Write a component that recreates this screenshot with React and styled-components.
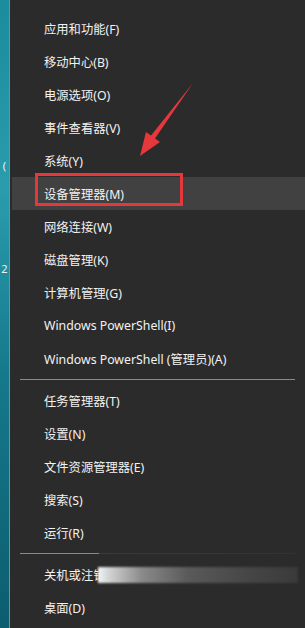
import React from 'react'
import styled, { createGlobalStyle } from 'styled-components'

const GlobalStyle = createGlobalStyle`
  html, body {
    margin: 0;
    padding: 0;
    background: #2b2b2b;
  }
  body {
    font-family: "Noto Sans", "Noto Sans CJK SC", sans-serif;
  }
`

const Page = styled.div`
  position: relative;
  display: flex;
  width: 305px;
  height: 628px;
  overflow: hidden;
`

const Desktop = styled.div`
  width: 9px;
  flex-shrink: 0;
  background: linear-gradient(180deg, #1b8c9c 0%, #2a9cae 30%, #15798b 60%, #0c5d6e 100%);
  display: flex;
  flex-direction: column;
  align-items: center;
  color: #e8f4f6;
  font-size: 11px;
  line-height: 1;
`

const Glyph = styled.span`
  margin-top: ${p => p.top}px;
`

const Menu = styled.div`
  flex: 1;
  border-left: 1px solid #8a8a8a;
  background: #2b2b2b;
  padding-top: 12px;
  display: flex;
  flex-direction: column;
`

const Item = styled.div`
  position: relative;
  height: 33px;
  display: flex;
  align-items: center;
  margin-left: 2px;
  padding-left: 32px;
  font-size: 12.3px;
  color: #f2f2f2;
  background: ${p => (p.active ? '#414141' : 'transparent')};
  white-space: nowrap;
`

const Divider = styled.div`
  height: 1px;
  margin: 4px 10px;
  background: ${p => p.faded
    ? 'linear-gradient(90deg, #8a8a8a 0, #8a8a8a 78px, #3a3a3a 80px, #333 100%)'
    : '#8a8a8a'};
`

const Mark = styled.div`
  position: absolute;
  left: 23px;
  top: -4px;
  width: 142px;
  height: 27px;
  border: 3px solid #e5383d;
`

const Smear = styled.div`
  position: absolute;
  left: 86px;
  top: 9px;
  width: 200px;
  height: 16px;
  background: linear-gradient(90deg, #f4f4f4 0%, #d0d0d0 6%, #8a8a8a 22%, #5a5a5a 45%, #464646 75%, #3a3a3a 100%);
  filter: blur(1.2px);
`

const Arrow = styled.svg`
  position: absolute;
  left: 0;
  top: 0;
  pointer-events: none;
`

const groups = [
  ['应用和功能(F)', '移动中心(B)', '电源选项(O)', '事件查看器(V)', '系统(Y)', '设备管理器(M)', '网络连接(W)', '磁盘管理(K)', '计算机管理(G)', 'Windows PowerShell(I)', 'Windows PowerShell (管理员)(A)'],
  ['任务管理器(T)', '设置(N)', '文件资源管理器(E)', '搜索(S)', '运行(R)'],
  ['关机或注销(U)', '桌面(D)'],
]

export default function App() {
  return (
    <Page>
      <GlobalStyle />
      <Desktop>
        <Glyph top={160}>(</Glyph>
        <Glyph top={92}>2</Glyph>
      </Desktop>
      <Menu>
        {groups.map((items, gi) => (
          <React.Fragment key={gi}>
            {gi > 0 && <Divider faded={gi === 2} />}
            {items.map(label => (
              <Item key={label} active={label === '设备管理器(M)'}>
                {label}
                {label === '设备管理器(M)' && <Mark />}
                {label === '关机或注销(U)' && <Smear />}
              </Item>
            ))}
          </React.Fragment>
        ))}
      </Menu>
      <Arrow width="305" height="628" viewBox="0 0 305 628">
        <polygon points="193,83 155,138.5 160,142 140,156 146,132 151,135.5" fill="#e5383d" />
      </Arrow>
    </Page>
  )
}
